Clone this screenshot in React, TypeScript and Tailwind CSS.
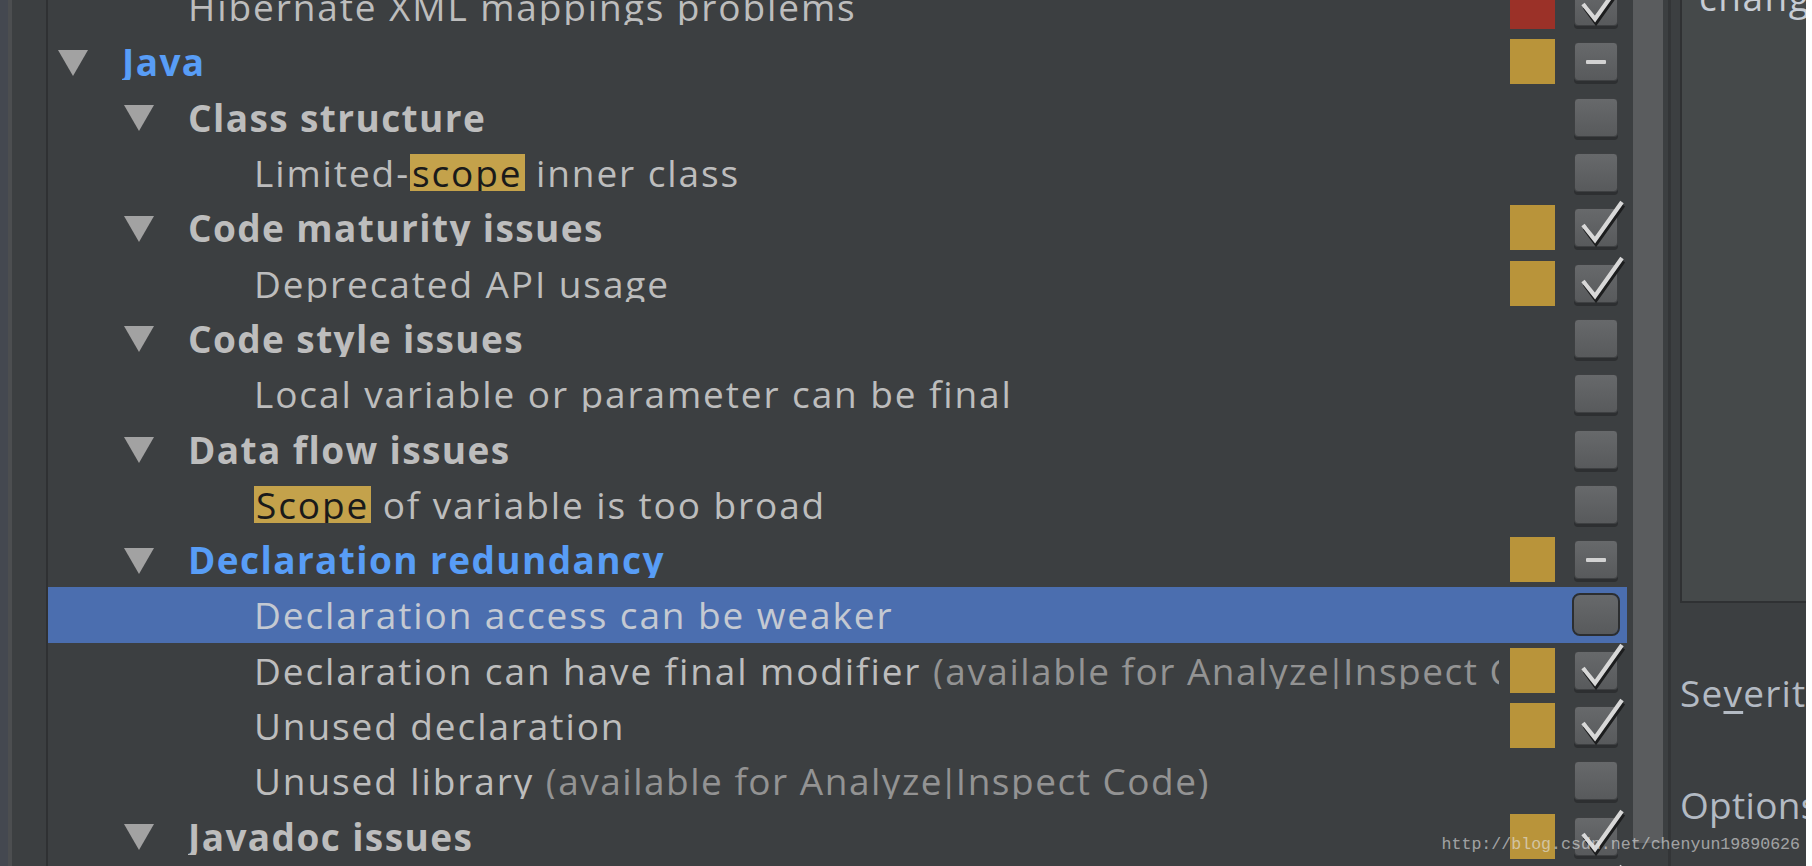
import React from "react";
import clsx from "clsx";

type Part = { t: string; mark?: boolean; hint?: boolean };
type Row = {
  level: 1 | 2 | 3;
  group?: boolean;
  blue?: boolean;
  parts: Part[];
  sev: "red" | "yellow" | null;
  check: "on" | "off" | "mixed";
  selected?: boolean;
};

const HINT = "(available for Analyze|Inspect Code)";

const rows: Row[] = [
  { level: 2, parts: [{ t: "Hibernate XML mappings problems" }], sev: "red", check: "on" },
  { level: 1, group: true, blue: true, parts: [{ t: "Java" }], sev: "yellow", check: "mixed" },
  { level: 2, group: true, parts: [{ t: "Class structure" }], sev: null, check: "off" },
  {
    level: 3,
    parts: [{ t: "Limited-" }, { t: "scope", mark: true }, { t: " inner class" }],
    sev: null,
    check: "off",
  },
  { level: 2, group: true, parts: [{ t: "Code maturity issues" }], sev: "yellow", check: "on" },
  { level: 3, parts: [{ t: "Deprecated API usage" }], sev: "yellow", check: "on" },
  { level: 2, group: true, parts: [{ t: "Code style issues" }], sev: null, check: "off" },
  { level: 3, parts: [{ t: "Local variable or parameter can be final" }], sev: null, check: "off" },
  { level: 2, group: true, parts: [{ t: "Data flow issues" }], sev: null, check: "off" },
  {
    level: 3,
    parts: [{ t: "Scope", mark: true }, { t: " of variable is too broad" }],
    sev: null,
    check: "off",
  },
  { level: 2, group: true, blue: true, parts: [{ t: "Declaration redundancy" }], sev: "yellow", check: "mixed" },
  { level: 3, parts: [{ t: "Declaration access can be weaker" }], sev: null, check: "off", selected: true },
  {
    level: 3,
    parts: [{ t: "Declaration can have final modifier " }, { t: HINT, hint: true }],
    sev: "yellow",
    check: "on",
  },
  { level: 3, parts: [{ t: "Unused declaration" }], sev: "yellow", check: "on" },
  { level: 3, parts: [{ t: "Unused library " }, { t: HINT, hint: true }], sev: null, check: "off" },
  { level: 2, group: true, parts: [{ t: "Javadoc issues" }], sev: "yellow", check: "on" },
  { level: 3, parts: [{ t: "Dangling Javadoc comment" }], sev: "yellow", check: "on" },
];

const indent = { 1: "pl-[10px]", 2: "pl-[76px]", 3: "pl-[142px]" };

function Triangle() {
  return (
    <svg width="30" height="27" viewBox="0 0 30 27" className="mt-[3px]">
      <polygon points="0,0 30,0 15,26" fill="#a2a2a2" />
    </svg>
  );
}

function CheckBox({ state, focused }: { state: Row["check"]; focused?: boolean }) {
  return (
    <div
      className={clsx(
        "relative ml-[19px] flex h-[39px] w-[44px] shrink-0 items-center justify-center bg-linear-to-b from-[#67696b] to-[#585a5c]",
        focused
          ? "rounded-[6px] outline-2 outline-[#2c2e30]"
          : "rounded-[4px] border border-[#3e4042] shadow-[0_3px_0_#2d2f31]"
      )}
    >
      {state === "mixed" && <div className="h-[4px] w-[20px] rounded-[1px] bg-[#d2d2d2]" />}
      {state === "on" && (
        <svg
          width="52"
          height="48"
          viewBox="0 0 52 48"
          className="absolute left-0 top-[-8px] overflow-visible"
        >
          <path d="M9 25 L20 40 L47 2" fill="none" stroke="#1c1d1e" strokeWidth="5" transform="translate(1 2)" />
          <path d="M8 24 L20 39 L47 1" fill="none" stroke="#d8d8d8" strokeWidth="4.2" />
        </svg>
      )}
    </div>
  );
}

// the hint's "|" sits tight against its neighbours, as in the IDE font
function Hint({ t }: { t: string }) {
  const [a, b] = t.split("|");
  return (
    <span className="tracking-[1.5px] text-[#939393]">
      {a.slice(0, -1)}
      <span className="tracking-[-3px]">{a.slice(-1)}|</span>
      {b}
    </span>
  );
}

function TreeRow({ row }: { row: Row }) {
  return (
    <div className={clsx("flex h-[55.3px] items-center", row.selected && "bg-[#4b6eaf]")}>
      <div className={clsx("flex min-w-0 flex-1 items-center", indent[row.level])}>
        <div className="flex w-[64px] shrink-0 items-center">{row.group && <Triangle />}</div>
        <div
          className={clsx(
            "min-w-0 flex-1 overflow-hidden whitespace-nowrap leading-none",
            row.group ? "font-bold tracking-[1.4px]" : "font-normal tracking-[1.9px]",
            row.blue ? "text-[#589df6]" : row.selected ? "text-[#c4c9d2]" : "text-[#bdbdbd]"
          )}
        >
          {row.parts.map((p, i) =>
            p.mark ? (
              <span key={i} className="rounded-[4px] bg-[#c4a24b] px-[2px] py-[2px] text-[#1a1a1a]">
                {p.t}
              </span>
            ) : p.hint ? (
              <Hint key={i} t={p.t} />
            ) : (
              <span key={i}>{p.t}</span>
            )
          )}
        </div>
      </div>
      <div
        className={clsx(
          "ml-[11px] h-[45px] w-[45px] shrink-0",
          row.sev === "red" && "bg-[#9b3128]",
          row.sev === "yellow" && "bg-[#b9943a]"
        )}
      />
      <CheckBox state={row.check} focused={row.selected} />
      <div className="w-[9px] shrink-0" />
    </div>
  );
}

export default function App() {
  return (
    <div className="relative flex h-[866px] w-[1812px] overflow-hidden bg-[#3c3f41] font-['Open_Sans',sans-serif] text-[37px]">
      {/* left gutter */}
      <div className="w-[8px] shrink-0 bg-[#444850]" />
      <div className="w-[4px] shrink-0 bg-[#4c4e50]" />
      <div className="w-[34px] shrink-0" />
      <div className="w-[2px] shrink-0 bg-[#2f3133]" />

      {/* inspections tree */}
      <div className="w-[1579px] shrink-0">
        <div className="-mt-[21px]">
          {rows.map((r, i) => (
            <TreeRow key={i} row={r} />
          ))}
        </div>
      </div>

      <div className="w-[6px] shrink-0" />
      <div className="h-[843px] w-[30px] shrink-0 bg-[#5a5c5e]" />
      <div className="w-[5px] shrink-0" />
      <div className="w-[3px] shrink-0 bg-[#333537]" />

      {/* description / options panel */}
      <div className="flex w-[135px] shrink-0 flex-col overflow-hidden pl-[9px]">
        <div className="h-[603px] w-[200px] shrink-0 overflow-hidden border-2 border-t-0 border-[#2f3133] bg-[#45494a] pl-[17px]">
          <div className="-mt-[22px] whitespace-nowrap leading-none tracking-[1.5px] text-[#c6ccd4]">changes</div>
        </div>
        <div className="mt-[68px] whitespace-nowrap leading-[44px] tracking-[1.2px] text-[#b3bac3]">
          Se<span className="underline underline-offset-4">v</span>erity
        </div>
        <div className="mt-[68px] whitespace-nowrap leading-[44px] tracking-[0.3px] text-[#b3bac3]">Options</div>
      </div>
      <div className="w-[6px] shrink-0 bg-white" />

      {/* blog watermark */}
      <div className="absolute bottom-[8px] right-[12px] font-['Liberation_Mono',monospace] text-[16.6px] text-[rgba(228,228,228,0.62)]">
        http://blog.csdn.net/chenyun19890626
      </div>
    </div>
  );
}
